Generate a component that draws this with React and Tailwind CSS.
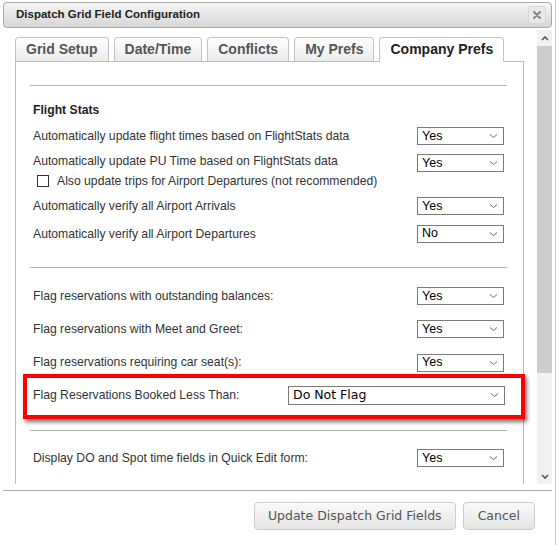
function Chevron() {
  return (
    <svg width="9" height="6" viewBox="0 0 9 6" className="shrink-0">
      <path d="M1 1.5l3.5 3 3.5-3" fill="none" stroke="#6b6b6b" strokeWidth="1" />
    </svg>
  );
}

function Select({ value }) {
  return (
    <div className="flex h-[18px] w-[87px] shrink-0 items-center justify-between border border-[#7a7a7a] bg-white pl-[4px] pr-[5px] text-[12.5px] leading-none text-black">
      <span>{value}</span>
      <Chevron />
    </div>
  );
}

function Row({ label, value, className }) {
  return (
    <div className={className}>
      <div className="flex items-center justify-between px-[3px]">
        <span>{label}</span>
        <Select value={value} />
      </div>
    </div>
  );
}

const tabs = ['Grid Setup', 'Date/Time', 'Conflicts', 'My Prefs', 'Company Prefs'];

export default function App() {
  return (
    <div
      className="flex h-[545px] w-[556px] flex-col border-r border-[#c8c8c8] bg-white pt-[2px] text-[12.2px] text-[#333]"
      style={{ fontFamily: '"Liberation Sans", Arial, sans-serif' }}
    >
      {/* title bar */}
      <div className="mx-[3px] flex h-[26px] items-center justify-between rounded-[4px] border border-[#a9a9a9] bg-gradient-to-b from-[#f6f6f6] to-[#d6d6d6] pl-[12px] pr-[5px]">
        <span className="text-[11.5px] font-bold text-[#222]">Dispatch Grid Field Configuration</span>
        <div className="flex h-[18px] w-[18px] items-center justify-center rounded-[3px] border border-[#d6d6d6] bg-[#e9e9e9]">
          <svg width="10" height="10" viewBox="0 0 10 10">
            <path d="M2 2l6 6M8 2l-6 6" stroke="#8a8a8a" strokeWidth="2.2" strokeLinecap="round" />
          </svg>
        </div>
      </div>

      {/* scroll area */}
      <div className="mt-[2px] flex h-[454px]">
        <div className="flex-1 overflow-hidden pl-[15px] pt-[7px]">
          <div className="flex items-end gap-[5px]">
            {tabs.map((t, i) =>
              i === 4 ? (
                <div
                  key={t}
                  className="relative z-10 -mb-px flex h-[25px] items-center rounded-t-[4px] border border-b-0 border-[#c4c4c4] bg-white px-[10px] pb-[1px] text-[14px] font-bold text-[#222]"
                >
                  {t}
                </div>
              ) : (
                <div
                  key={t}
                  className="flex h-[24px] items-center rounded-t-[4px] border border-b-0 border-[#c4c4c4] bg-gradient-to-b from-white to-[#ebebeb] px-[10px] text-[14px] font-bold text-[#555]"
                >
                  {t}
                </div>
              )
            )}
          </div>

          <div className="w-[509px] border border-[#bdbdbd] pb-[40px] pl-[14px] pr-[16px] pt-[23px]">
            <div className="h-px bg-[#b4b4b4]" />

            <div className="mt-[17px] h-[14px] px-[3px] font-bold leading-[14px] text-[#222]">Flight Stats</div>

            <Row className="mt-[10px]" label="Automatically update flight times based on FlightStats data" value="Yes" />

            <div className="mt-[9px] flex items-start justify-between px-[3px]">
              <div>
                <div className="h-[14px] leading-[14px]">Automatically update PU Time based on FlightStats data</div>
                <div className="mt-[6px] flex h-[14px] items-center">
                  <span className="ml-[4px] h-[12px] w-[12px] border border-[#333] bg-white" />
                  <span className="ml-[8px] leading-[14px]">Also update trips for Airport Departures (not recommended)</span>
                </div>
              </div>
              <div>
                <Select value="Yes" />
              </div>
            </div>

            <Row className="mt-[9px]" label="Automatically verify all Airport Arrivals" value="Yes" />
            <Row className="mt-[9px]" label="Automatically verify all Airport Departures" value="No" />

            <div className="mt-[24px] h-px bg-[#b4b4b4]" />

            <Row className="mt-[19px]" label="Flag reservations with outstanding balances:" value="Yes" />
            <Row className="mt-[15px]" label="Flag reservations with Meet and Greet:" value="Yes" />
            <Row className="mt-[15px]" label="Flag reservations requiring car seat(s):" value="Yes" />

            <div className="relative mt-[14px]">
              <div className="flex items-center justify-between pl-[3px] pr-[2px]">
                <span>Flag Reservations Booked Less Than:</span>
                <div
                  className="flex h-[19px] w-[217px] items-center justify-between border border-[#7a7a7a] bg-white pl-[4px] pr-[5px] text-[12.5px] leading-none text-black"
                  style={{ fontFamily: '"DejaVu Sans", Verdana, sans-serif' }}
                >
                  <span>Do Not Flag</span>
                  <Chevron />
                </div>
              </div>
              <div className="pointer-events-none absolute -bottom-[14px] -left-[7px] -right-[18px] -top-[12px] border-[4px] border-[#ff0000] shadow-[2px_3px_4px_rgba(0,0,0,0.55)]" />
            </div>

            <div className="mt-[25px] h-px bg-[#b4b4b4]" />

            <Row className="mt-[18px]" label="Display DO and Spot time fields in Quick Edit form:" value="Yes" />
          </div>
        </div>

        {/* scrollbar */}
        <div className="flex w-[15px] flex-col bg-[#f1f1f1]">
          <div className="flex h-[16px] items-center justify-center">
            <svg width="8" height="5" viewBox="0 0 8 5">
              <path d="M1 4l3-3 3 3" fill="none" stroke="#505050" strokeWidth="1.5" />
            </svg>
          </div>
          <div className="h-[327px] bg-[#cdcdcd]" />
          <div className="flex-1" />
          <div className="flex h-[16px] items-center justify-center">
            <svg width="8" height="5" viewBox="0 0 8 5">
              <path d="M1 1l3 3 3-3" fill="none" stroke="#505050" strokeWidth="1.5" />
            </svg>
          </div>
        </div>
        <div className="w-[3px]" />
      </div>

      <div className="mx-[3px] mt-[6px] h-px bg-[#ababab]" />

      <div
        className="mt-[11px] flex justify-end gap-[7px] pr-[20px]"
        style={{ fontFamily: '"DejaVu Sans", Verdana, sans-serif' }}
      >
        <div className="flex h-[28px] items-center rounded-[4px] border border-[#cccccc] bg-gradient-to-b from-[#fafafa] to-[#e4e4e4] px-[13px] text-[12.5px] text-[#555]">
          Update Dispatch Grid Fields
        </div>
        <div className="flex h-[28px] items-center rounded-[4px] border border-[#cccccc] bg-gradient-to-b from-[#fafafa] to-[#e4e4e4] px-[14px] text-[12.5px] text-[#555]">
          Cancel
        </div>
      </div>
    </div>
  );
}
